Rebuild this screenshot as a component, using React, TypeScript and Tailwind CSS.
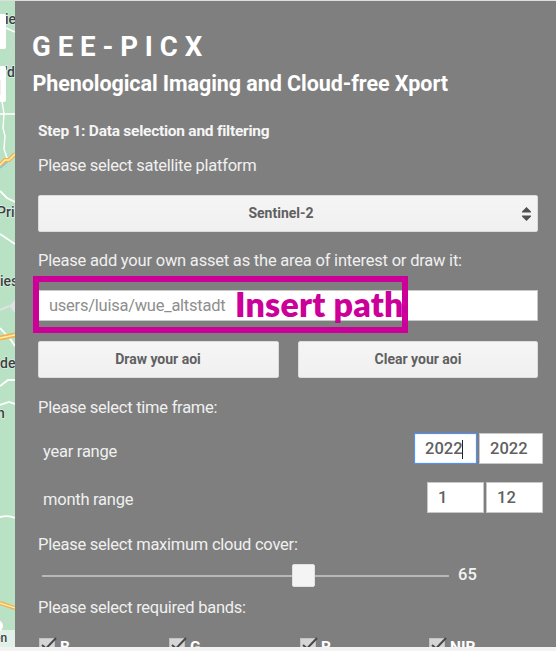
import type { ReactNode } from "react";

function MapStrip() {
  return (
    <svg
      className="block h-[646px] w-[15px] shrink-0 bg-[#b9e2c5] font-[Roboto,sans-serif]"
      viewBox="0 1 15 646"
      fill="none"
    >
      <path d="M13 25C13 45 10 60 7 72" stroke="#cbd8d0" strokeWidth="1.5" />
      <path d="M6 28L15 32" stroke="#fff" strokeWidth="1.5" />
      <path d="M2 101L4 114H15M0 114H4L3 128L5 136L4 149L7 158L2 165" stroke="#fff" strokeWidth="1.4" />
      <path d="M0 168L6 163L15 154" stroke="#8fb8dc" strokeWidth="1.5" />
      <path d="M0 165L5 160L9 160L15 154" stroke="#f3b24a" strokeWidth="4" />
      <path d="M0 165L5 160L9 160L15 154" stroke="#fff0b5" strokeWidth="1.4" />
      <path d="M0 191L7 198L15 202M0 234L15 244" stroke="#fff" strokeWidth="1.8" />
      <path d="M9 306L15 300V313Z" fill="#dde2e2" />
      <path d="M0 310L9 306" stroke="#dde2e2" strokeWidth="2" />
      <path d="M0 328L11 340L15 346" stroke="#fff" strokeWidth="1.8" />
      <path d="M0 338L15 335" stroke="#f3b24a" strokeWidth="5" />
      <path d="M0 338L15 335" stroke="#fff0b5" strokeWidth="1.6" />
      <path d="M0 386L8 380H15M0 405L9 402L15 404M0 517Q9 515 15 518" stroke="#fff" strokeWidth="1.8" />
      <path d="M0 603L15 608" stroke="#f3b24a" strokeWidth="4" />
      <path d="M0 603L15 608" stroke="#fff0b5" strokeWidth="1.3" />
      <path d="M0 620L15 624" stroke="#cbd8d0" strokeWidth="1.5" />
      <path d="M0 630H15V647H0Z" fill="#e2f1e7" />
      <circle cx="-3" cy="626" r="6" fill="#fff" />
      <g fill="#3a3f41" stroke="#e8f5ec" strokeWidth="1" paintOrder="stroke" fontSize="14" fontWeight="500">
        <text x="5" y="24">ie</text>
        <text x="5" y="77">'d</text>
        <text x="-3" y="217">Pric</text>
        <text x="0" y="286">ies</text>
        <text x="0" y="368">de</text>
        <text x="-3" y="418">n</text>
        <text x="-6" y="642" fontSize="12">en</text>
      </g>
      <rect x="-5" y="14" width="11" height="35" rx="2" fill="#fff" />
      <rect x="-5" y="66" width="11" height="36" rx="2" fill="#fff" />
      <path d="M0 80V95" stroke="#ddd" />
    </svg>
  );
}

function Label({ children, className }: { children: ReactNode; className: string }) {
  return (
    <div
      className={`h-6 text-[16.5px] leading-[26px] tracking-[-0.25px] whitespace-nowrap text-[#f0f0f0] ${className}`}
    >
      {children}
    </div>
  );
}

function Button({ children, className }: { children: ReactNode; className: string }) {
  return (
    <button
      className={`h-[37px] rounded-[2px] border border-[#dcdcdc] bg-linear-to-b from-[#f5f5f5] to-[#f0f0f0] text-[14px] font-bold text-[#606060] ${className}`}
    >
      {children}
    </button>
  );
}

function NumberBox({ value, className, focused }: { value: string; className: string; focused?: boolean }) {
  return (
    <div
      className={`flex h-[31px] items-center border bg-white pt-px pl-[10px] text-[16.5px] font-medium text-[#606060] ${
        focused ? "border-[#4d90fe] inset-shadow-[0_0_1px_#4d90fe]" : "border-[#c8c8c8]"
      } ${className}`}
    >
      {value}
      {focused && <span className="-ml-px h-[19px] w-px bg-[#222]" />}
    </div>
  );
}

function Band({ name, className }: { name: string; className: string }) {
  return (
    <div className={`flex shrink-0 ${className}`}>
      <svg className="h-4 w-[18px] overflow-visible" viewBox="0 0 18 16" fill="none">
        <rect x="0.5" y="0.5" width="15" height="15" fill="#d5d5d5" stroke="#c2c2c2" />
        <path d="M3 7L7 10.5L17 0" stroke="#484848" strokeWidth="2" />
      </svg>
      <span className="ml-[3px] text-[15.5px] leading-[18px] font-bold text-white">{name}</span>
    </div>
  );
}

export default function App() {
  return (
    <div className="h-[651px] w-[556px] overflow-hidden bg-[#f3f3f3] font-[Roboto,sans-serif]">
      <div className="h-px bg-[#dedede]" />
      <div className="flex h-[646px] overflow-hidden">
        <MapStrip />
        <main className="h-[646px] w-[541px] overflow-hidden bg-[#7f7f7f] pt-[29px] pr-[18px] pl-[23px]">
          <h1 className="-ml-[6px] h-8 text-[27.6px] leading-[34px] font-bold whitespace-nowrap text-white">
            G E E - P I C X
          </h1>
          <h2 className="mt-[6px] -ml-[6px] h-[30px] pl-[0.5px] text-[21.5px] leading-[32px] font-bold tracking-[-0.07px] whitespace-nowrap text-white">
            Phenological Imaging and Cloud-free Xport
          </h2>
          <h3 className="mt-[21px] h-6 text-[15.5px] leading-[25px] font-bold tracking-[-0.25px] whitespace-nowrap text-[#f5f5f5]">
            Step 1: Data selection and filtering
          </h3>
          <Label className="mt-[10px]">Please select satellite platform</Label>
          <button className="mt-[18px] flex h-[37px] w-full items-center rounded-[2px] border border-[#dcdcdc] bg-linear-to-b from-[#f5f5f5] to-[#f0f0f0] pr-[6px] text-[14px] font-bold text-[#606060]">
            <span className="flex-1 pl-[1px]">Sentinel-2</span>
            <svg className="h-[14px] w-[9px]" viewBox="0 0 9 14" fill="#505050">
              <path d="M4.5 0L9 4.5V5.5H0V4.5ZM0 8.5H9V9.5L4.5 14L0 9.5Z" />
            </svg>
          </button>
          <Label className="mt-[16px]">
            <span className="tracking-[-0.21px]">Please add your own asset as the area of interest or draw it:</span>
          </Label>
          <div className="relative mt-[18px] flex h-[31px] items-center border border-[#c8c8c8] bg-white pl-[10px] text-[16.5px] text-[#8e8e8e]">
            <span className="pt-px tracking-[-0.25px]">users/luisa/wue_altstadt</span>
            <div className="absolute -top-[15px] -left-[6px] h-[57px] w-[375px] border-6 border-[#cc0099]" />
            <span className="absolute -top-[7px] left-[196px] font-[Lato,sans-serif] text-[34px] leading-10 font-extrabold tracking-[0.2px] whitespace-nowrap text-[#cc0099]">
              Insert path
            </span>
          </div>
          <div className="mt-[20px] flex justify-between">
            <Button className="w-[241px] pr-[1px]">Draw your aoi</Button>
            <Button className="w-[240px]">Clear your aoi</Button>
          </div>
          <Label className="mt-[17px]">Please select time frame:</Label>
          <div className="mt-[14px] -mr-[5px] flex h-[31px] items-center gap-[2px] pl-[5px]">
            <Label className="mt-[4px] flex-1">year range</Label>
            <NumberBox value="2022" focused className="w-[63px]" />
            <NumberBox value="2022" className="w-[64px]" />
          </div>
          <div className="mt-[18px] -mr-[5px] flex h-[31px] items-center gap-[2px] pl-[5px]">
            <Label className="mt-[2px] flex-1">month range</Label>
            <NumberBox value="1" className="w-[57px]" />
            <NumberBox value="12" className="w-[57px]" />
          </div>
          <Label className="mt-[19px]">Please select maximum cloud cover:</Label>
          <div className="mt-[8px] ml-[4px] flex h-[23px] items-center">
            <div className="h-[2px] w-[250px] bg-[#b8b8b8]" />
            <div className="h-[23px] w-[23px] rounded-[2px] border border-[#e2e2e2] bg-[#f4f4f4]" />
            <div className="h-[2px] w-[134px] bg-[#b8b8b8]" />
            <span className="ml-[9px] text-[16.5px] font-medium text-[#f3f3f3]">65</span>
          </div>
          <Label className="mt-[8px]">Please select required bands:</Label>
          <div className="mt-[19px] ml-[1px] flex">
            <Band name="B" className="w-[130px]" />
            <Band name="G" className="w-[131px]" />
            <Band name="R" className="w-[129px]" />
            <Band name="NIR" className="w-[80px]" />
          </div>
        </main>
      </div>
    </div>
  );
}
